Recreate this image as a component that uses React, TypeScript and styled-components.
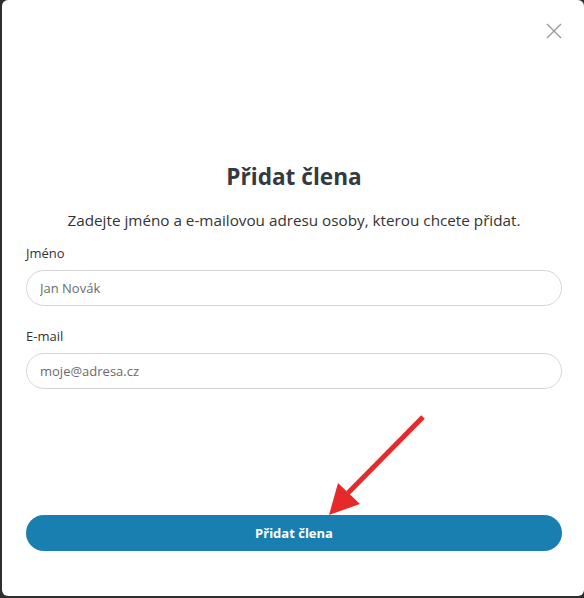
import React from "react";
import styled, { createGlobalStyle } from "styled-components";

const Global = createGlobalStyle`
  html, body { margin: 0; padding: 0; background: #2e2e2e; overflow: hidden; }
  body { font-family: "Open Sans", "Noto Sans", sans-serif; }
  * { box-sizing: border-box; }
`;

const Page = styled.div`
  width: 584px;
  height: 598px;
  padding: 0 0 2px 2px;
  display: flex;
`;

const Modal = styled.div`
  position: relative;
  flex: 1;
  background: #ffffff;
  border-radius: 6px;
  display: flex;
  flex-direction: column;
  padding: 0 22px 45px 24px;
`;

const CloseButton = styled.button`
  position: absolute;
  top: 23px;
  right: 22px;
  width: 16px;
  height: 16px;
  padding: 0;
  border: none;
  background: transparent;
  display: flex;
  align-items: center;
  justify-content: center;
`;

const Title = styled.h1`
  margin: 161px 0 0;
  font-size: 22.6px;
  font-weight: 700;
  color: #343a40;
  text-align: center;
  line-height: 32px;
`;

const Subtitle = styled.p`
  margin: 16px 0 0;
  font-size: 15.25px;
  color: #333;
  text-align: center;
  line-height: 22px;
`;

const Field = styled.div<{ $gap: number }>`
  display: flex;
  flex-direction: column;
  margin-top: ${(p) => p.$gap}px;
`;

const Label = styled.label`
  font-size: 13px;
  color: #333;
  line-height: 18px;
  margin-bottom: 8px;
`;

const Input = styled.input`
  height: 36px;
  border: 1px solid #d6d6d6;
  border-radius: 18px;
  padding: 0 13px;
  font-family: inherit;
  font-size: 13px;
  color: #333;
  outline: none;
  &::placeholder { color: #6b6b6b; }
`;

const Spacer = styled.div`
  flex: 1;
`;

const SubmitButton = styled.button`
  height: 36px;
  border: none;
  border-radius: 18px;
  background: #187fb0;
  color: #fff;
  font-family: inherit;
  font-size: 13px;
  font-weight: 700;
`;

const Arrow = styled.svg`
  position: absolute;
  left: 0;
  top: 0;
  pointer-events: none;
`;

export default function App() {
  return (
    <>
      <Global />
      <Page>
        <Modal>
          <CloseButton aria-label="Zavřít">
            <svg width="16" height="16" viewBox="0 0 16 16">
              <path d="M1 1L15 15M15 1L1 15" stroke="#9a9a9a" strokeWidth="1.4" />
            </svg>
          </CloseButton>
          <Title>Přidat člena</Title>
          <Subtitle>Zadejte jméno a e-mailovou adresu osoby, kterou chcete přidat.</Subtitle>
          <Field $gap={13}>
            <Label>Jméno</Label>
            <Input placeholder="Jan Novák" />
          </Field>
          <Field $gap={21}>
            <Label>E-mail</Label>
            <Input placeholder="moje@adresa.cz" />
          </Field>
          <Spacer />
          <SubmitButton>Přidat člena</SubmitButton>
          <Arrow width="582" height="596" viewBox="0 0 582 596">
            <line x1="421" y1="417" x2="346" y2="493" stroke="#e8292b" strokeWidth="5" />
            <polygon points="327,515 336,483 358,504" fill="#e8292b" />
          </Arrow>
        </Modal>
      </Page>
    </>
  );
}
